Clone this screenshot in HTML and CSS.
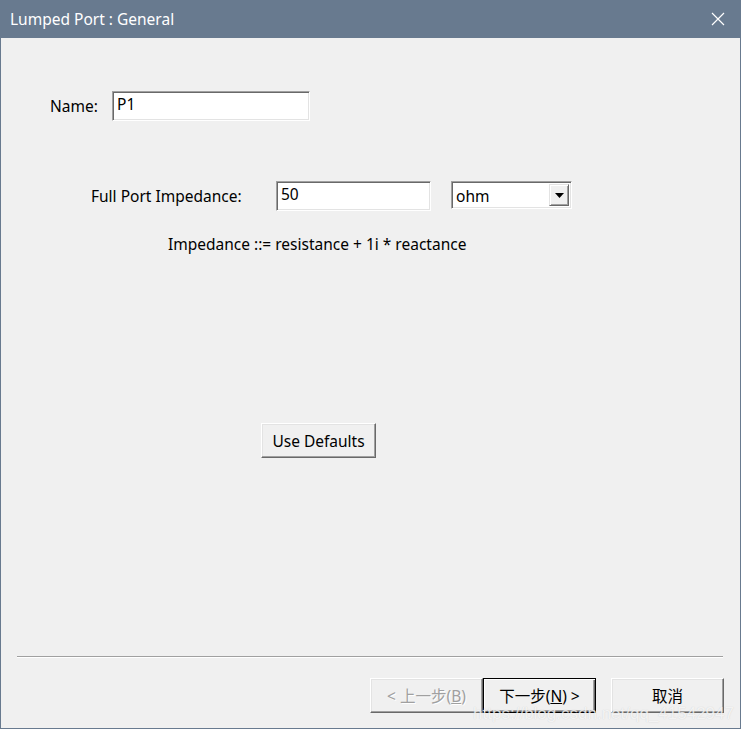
FILE: index.html
```html
<!DOCTYPE html>
<html lang="en">
<head>
    <meta charset="UTF-8">
    <title>Lumped Port : General</title>
    <link rel="stylesheet" href="styles.css">
</head>
<body>
    <div class="window">
        <div class="titlebar">
            <span class="title">Lumped Port : General</span>
            <svg class="close" width="14" height="14" viewBox="0 0 14 14">
                <path d="M1 1 L13 13 M13 1 L1 13" stroke="#fff" stroke-width="1.2" fill="none"/>
            </svg>
        </div>

        <div class="content">
            <!-- name -->
            <div class="row row-name">
                <label class="label label-name">Name:</label>
                <div class="field field-name">P1</div>
            </div>

            <!-- impedance -->
            <div class="row row-imp">
                <label class="label label-imp">Full Port Impedance:</label>
                <div class="field field-imp">50</div>
                <div class="combo">
                    <span class="combo-text">ohm</span>
                    <span class="combo-btn">
                        <svg width="9" height="5" viewBox="0 0 9 5"><path d="M0 0 H9 L4.5 5 Z" fill="#000"/></svg>
                    </span>
                </div>
            </div>

            <div class="formula">Impedance ::= resistance + 1i * reactance</div>

            <div class="row row-defaults">
                <button class="btn btn-defaults">Use Defaults</button>
            </div>

            <div class="separator"></div>

            <div class="footer">
                <button class="btn btn-nav disabled">&lt; 上一步(<u>B</u>)</button>
                <button class="btn btn-nav default">下一步(<u>N</u>) &gt;</button>
                <button class="btn btn-nav cancel">取消</button>
            </div>
        </div>

        <div class="watermark">https://blog.csdn.net/qq_41542947</div>
    </div>
</body>
</html>
```

FILE: styles.css
```css
body {
    margin: 0;
    font-family: "Noto Sans", "Noto Sans CJK SC", sans-serif;
    background: #f0f0f0;
}
.window {
    position: relative;
    width: 741px;
    height: 729px;
    box-sizing: border-box;
    border: 1px solid #687a8f;
    border-top: none;
    background: #f0f0f0;
    display: flex;
    flex-direction: column;
    overflow: hidden;
}
.titlebar {
    height: 38px;
    background: #687a8f;
    display: flex;
    align-items: center;
    justify-content: space-between;
    padding: 0 16px 0 10px;
    margin: 0 -1px;
}
.title {
    color: #fff;
    font-size: 15.5px;
}
.close {
    display: block;
}
.content {
    flex: 1;
    display: flex;
    flex-direction: column;
    color: #000;
    font-size: 15.5px;
}
.row {
    display: flex;
    align-items: center;
}
.label {
    white-space: nowrap;
}

/* sunken edit field */
.field, .combo {
    background: #fff;
    box-sizing: border-box;
    border: 1px solid;
    border-color: #a0a0a0 #fff #fff #a0a0a0;
    box-shadow: inset 1px 1px #696969, inset -1px -1px #e3e3e3;
    padding: 2px 0 0 4px;
    font-size: 15.5px;
    line-height: 20px;
}
.row-name {
    margin-top: 53px;
    padding-left: 49px;
}
.label-name {
    width: 62px;
}
.field-name {
    width: 198px;
    height: 30px;
}
.row-imp {
    margin-top: 60px;
    padding-left: 90px;
    align-items: flex-start;
}
.label-imp {
    width: 185px;
    padding-top: 4px;
}
.field-imp {
    width: 155px;
    height: 30px;
}
.combo {
    width: 121px;
    height: 28px;
    margin-left: 20px;
    display: flex;
    justify-content: space-between;
    padding: 0 2px 0 4px;
    align-items: center;
}
.combo-text {
    padding-top: 1px;
}
.combo-btn {
    width: 20px;
    height: 22px;
    box-sizing: border-box;
    background: #f0f0f0;
    border: 1px solid;
    border-color: #e3e3e3 #696969 #696969 #e3e3e3;
    box-shadow: inset 1px 1px #fff, inset -1px -1px #a0a0a0;
    display: flex;
    align-items: center;
    justify-content: center;
}
.combo-btn svg {
    display: block;
}
.formula {
    margin-top: 22px;
    padding-left: 167px;
    line-height: 22px;
}

/* raised buttons */
.btn {
    font-family: inherit;
    font-size: 15.5px;
    color: #000;
    background: #f0f0f0;
    box-sizing: border-box;
    border: 1px solid;
    border-color: #fff #696969 #696969 #fff;
    box-shadow: inset -1px -1px #a0a0a0, inset 1px 1px #e3e3e3;
    padding: 0;
    cursor: pointer;
}
.row-defaults {
    margin-top: 168px;
    padding-left: 260px;
}
.btn-defaults {
    width: 115px;
    height: 35px;
}
.separator {
    margin: 198px 17px 0 16px;
    height: 1px;
    background: #a0a0a0;
    border-bottom: 1px solid #fff;
}
.footer {
    display: flex;
    margin-top: 20px;
    padding-left: 369px;
}
.btn-nav {
    width: 113px;
    height: 35px;
}
.btn-nav u {
    text-decoration-thickness: 1px;
}
.disabled {
    color: #a0a0a0;
    text-shadow: 1px 1px #fff;
    cursor: default;
}
.default {
    border: 1px solid #000;
    box-shadow: inset 1px 1px #fff, inset -1px -1px #696969, inset -2px -2px #a0a0a0;
}
.cancel {
    margin-left: 15px;
}
.watermark {
    position: absolute;
    right: 6px;
    bottom: 4px;
    font-family: "Liberation Sans", sans-serif;
    font-size: 17px;
    color: rgba(255, 255, 255, 0.75);
    text-shadow: 0 0 1px rgba(120, 120, 120, 0.3);
    pointer-events: none;
}
```
